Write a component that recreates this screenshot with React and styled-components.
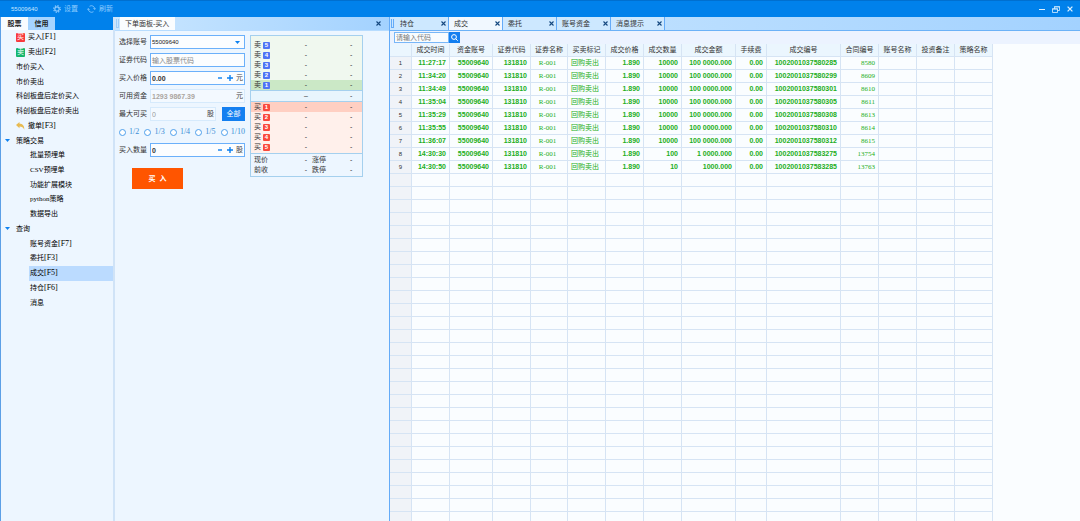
import React, { useState } from "react";
import styled, { createGlobalStyle } from "styled-components";

const GlobalStyle = createGlobalStyle`
  * {
    box-sizing: border-box;
  }
  body {
    margin: 0;
    background: #edf6ff;
    color: #333;
    font-family: "Liberation Sans", "Noto Sans CJK SC", sans-serif;
    font-size: 7px;
    line-height: 10px;
  }
  button, input, select {
    margin: 0;
    padding: 0;
    border: 0;
    background: none;
    color: inherit;
    font: inherit;
  }
  button {
    cursor: pointer;
  }
`;

const Window = styled.div`
  display: flex;
  flex-direction: column;
  height: 100vh;
  overflow: hidden;
`;

const Latin = styled.span`
  font-family: "Liberation Serif", serif;
  font-size: ${(props) => props.$size || 7}px;
  line-height: 8px;
`;

const TitleBar = styled.header`
  display: flex;
  align-items: center;
  flex: none;
  height: 17px;
  padding: 0 6px 0 11px;
  border-top: 1px solid #006fcf;
  background: #0081eb;
  color: #a9d8ff;
`;

const Account = styled.span`
  width: 42px;
  color: #c6e5ff;
  font-size: 6px;
`;

const TitleButton = styled.button`
  display: flex;
  align-items: center;
  gap: 3px;
  margin-right: 9px;
  color: #8ccaff;
`;

const WindowButtons = styled.div`
  display: flex;
  align-items: center;
  gap: 6px;
  margin-left: auto;
`;

const IconButton = styled.button`
  display: flex;
  align-items: center;
  justify-content: center;
  width: 8px;
  height: 10px;
  color: ${(props) => props.$color || "#d9efff"};
`;

const Main = styled.main`
  display: flex;
  flex: 1;
  min-height: 0;
`;

/* ---------- sidebar ---------- */

const Sidebar = styled.nav`
  flex: none;
  width: 113px;
  border-left: 1px solid #5c9fe6;
`;

const SideTabs = styled.div`
  display: flex;
  height: 13px;
  background: #0081eb;
`;

const SideTab = styled.button`
  width: 27px;
  background: ${(props) => (props.$active ? "#f8fcff" : "#a5d4ff")};
  color: #222;
  font-weight: 700;
`;

const Tree = styled.ul`
  display: grid;
  grid-auto-rows: 1fr;
  height: 280px;
  margin: 0;
  padding: 0;
  list-style: none;
`;

const TreeRow = styled.li`
  display: flex;
  padding-left: ${(props) => (props.$child ? 28 : 3)}px;
`;

const TreeButton = styled.button`
  display: flex;
  align-items: center;
  flex: 1;
  padding-left: 1px;
  background: ${(props) => (props.$active ? "#bbdbff" : "none")};
  color: #000;
  white-space: nowrap;
`;

const Caret = styled.span`
  display: flex;
  width: 11px;
`;

const ItemIcon = styled.span`
  display: flex;
  align-items: center;
  justify-content: center;
  width: 9px;
  height: 9px;
  margin-right: 3px;
  border-radius: 1px;
  background: ${(props) => props.$bg || "none"};
  color: #fff;
`;

/* ---------- docks ---------- */

const OrderDock = styled.section`
  flex: none;
  width: 277px;
  border-left: 2px solid #d0e3f7;
  border-right: 1px solid #64abf8;
`;

const DockHeader = styled.div`
  display: flex;
  height: 14px;
  border-bottom: 1px solid ${(props) => props.$line || "#b7dcff"};
  background: linear-gradient(90deg, #cbe7ff, #a3d2ff);
`;

const Grip = styled.span`
  width: 3px;
  height: 9px;
  margin: 2px 1px 0;
  border: 1px solid ${(props) => props.$color || "#a0cdf8"};
  border-top-width: 0;
`;

const DockTitle = styled.h1`
  width: 55px;
  margin: 0;
  padding: 2px 5px;
  background: #fafdff;
  font-size: 7px;
  font-weight: 400;
  white-space: nowrap;
`;

const DockClose = styled.div`
  display: flex;
  align-items: center;
  margin: 0 7px 0 auto;
`;

const OrderBody = styled.div`
  display: flex;
  align-items: flex-start;
  gap: 5px;
  padding: 4px 0 0 4px;
`;

const Form = styled.form`
  display: flex;
  flex-direction: column;
  gap: 4px;
  width: 126px;
`;

const FormRow = styled.div`
  display: flex;
  align-items: center;
  height: 14px;
`;

const Label = styled.label`
  width: 31px;
  color: #333;
  white-space: nowrap;
`;

const Field = styled.div`
  display: flex;
  align-items: center;
  flex: 1;
  min-width: 0;
  height: 14px;
  padding: 0 1px;
  border: 1px solid ${(props) => (props.$flat ? "#d6eafc" : "#6bb0fa")};
  background: ${(props) => (props.$flat ? "#f3f9ff" : "#fbfdff")};
  color: #444;
`;

const TextInput = styled.input`
  flex: 1;
  min-width: 0;
  height: 12px;
  outline: none;
  color: ${(props) => props.$color || "#333"};
  font-weight: ${(props) => (props.$bold ? 700 : 400)};

  &::placeholder {
    color: #888;
    opacity: 1;
  }
`;

const AccountSelect = styled.select`
  flex: 1;
  min-width: 0;
  appearance: none;
  outline: none;
  color: #222;
  font-size: 6px;
`;

const AllButton = styled.button`
  width: 23px;
  height: 14px;
  margin-left: 6px;
  background: #137ff0;
  color: #fff;
`;

const Fractions = styled.div`
  display: flex;
  align-items: center;
  justify-content: space-between;
  height: 14px;
  color: #3a8fd6;
`;

const Fraction = styled.label`
  display: flex;
  align-items: center;
  gap: 3px;
`;

const Radio = styled.input`
  appearance: none;
  width: 7px;
  height: 7px;
  border: 1px solid #4d9fec;
  border-radius: 50%;
  background: #fff;
`;

const BuyButton = styled.button`
  width: 51px;
  height: 21px;
  margin: 7px 0 0 13px;
  background: #ff5500;
  color: #fff;
  font-weight: 700;
  white-space: pre;
`;

const Quotes = styled.div`
  width: 113px;
  border: 1px solid #a5d0ee;
`;

const QuoteZone = styled.div`
  padding: ${(props) => props.$pad || "0"};
  border-bottom: ${(props) => (props.$last ? "0" : "1px solid #a5d0ee")};
  background: ${(props) => props.$bg};
`;

const QuoteRow = styled.div`
  display: grid;
  grid-template-columns: 9px 37px 12px 1fr 12px;
  align-items: center;
  height: 10px;
  padding-left: 3px;
  background: ${(props) => props.$bg || "none"};
  white-space: nowrap;
`;

const Level = styled.span`
  width: 7px;
  height: 7px;
  border-radius: 1px;
  background: ${(props) => props.$bg};
  color: #fff;
  font-size: 6px;
  font-weight: 700;
  line-height: 7px;
  text-align: center;
`;

const Dash = styled.span`
  grid-column: ${(props) => props.$col};
  text-align: ${(props) => (props.$col === 3 ? "center" : "left")};
`;

/* ---------- trades ---------- */

const TradesDock = styled.section`
  display: flex;
  flex-direction: column;
  flex: 1;
  min-width: 0;
`;

const Tab = styled.div`
  display: flex;
  align-items: center;
  justify-content: space-between;
  width: 54px;
  padding: 0 1px 0 5px;
  border-right: 1px solid #64abf8;
  background: ${(props) => (props.$active ? "#f1f8ff" : "#cde8ff")};
  white-space: nowrap;
`;

const SearchBar = styled.div`
  display: flex;
  align-items: center;
  flex: none;
  height: 13px;
  padding-left: 4px;
  background: #ecf3ff;
`;

const SearchInput = styled.input`
  width: 55px;
  height: 11px;
  padding: 0 1px;
  border: 1px solid #78b7f7;
  background: #f8fcff;

  &::placeholder {
    color: #777;
    opacity: 1;
  }
`;

const SearchButton = styled.button`
  display: flex;
  align-items: center;
  justify-content: center;
  width: 11px;
  height: 11px;
  background: #137ff0;
  color: #fff;
`;

const TableWrap = styled.div`
  flex: 1;
  min-height: 0;
  overflow: hidden;
  background: #fafdff;
`;

const Table = styled.table`
  width: 603px;
  table-layout: fixed;
  border-collapse: separate;
  border-spacing: 0;
  white-space: nowrap;

  th, td {
    height: 13px;
    padding: 0 3px 0 0;
    overflow: hidden;
    border: 1px solid #d6e4f4;
    border-width: 0 1px 1px 0;
    line-height: 10px;
    font-weight: 400;
  }
  thead th {
    padding: 0;
    background: #ebf6fe;
    text-align: center;
  }
  tbody th {
    padding: 0;
    background: #f0f3f8;
    text-align: center;
    font-size: 6px;
  }
`;

const Cell = styled.td`
  color: #22ae22;
  text-align: ${(props) => (props.$kind === "text" ? "center" : "right")};

  && {
    font-weight: ${(props) => (props.$kind === "num" ? 700 : 400)};
  }
`;

const menu = [
  { label: "买入", hotkey: "[F1]", icon: "买", bg: "#f8393c" },
  { label: "卖出", hotkey: "[F2]", icon: "卖", bg: "#12b56c" },
  { label: "市价买入" },
  { label: "市价卖出" },
  { label: "科创板盘后定价买入" },
  { label: "科创板盘后定价卖出" },
  { label: "撤单", hotkey: "[F3]", undo: true },
  { label: "策略交易", group: true },
  { label: "批量预埋单", child: true },
  { label: "CSV预埋单", child: true },
  { label: "功能扩展模块", child: true },
  { label: "python策略", child: true },
  { label: "数据导出", child: true },
  { label: "查询", group: true },
  { label: "账号资金", hotkey: "[F7]", child: true },
  { label: "委托", hotkey: "[F3]", child: true },
  { label: "成交", hotkey: "[F5]", child: true },
  { label: "持仓", hotkey: "[F6]", child: true },
  { label: "消息", child: true },
];

const columns = [
  { title: "成交时间", width: 38, kind: "num" },
  { title: "资金账号", width: 43, kind: "num" },
  { title: "证券代码", width: 38, kind: "num" },
  { title: "证券名称", width: 37, kind: "text" },
  { title: "买卖标记", width: 38, kind: "text" },
  { title: "成交价格", width: 38, kind: "num" },
  { title: "成交数量", width: 38, kind: "num" },
  { title: "成交金额", width: 54, kind: "num" },
  { title: "手续费", width: 31, kind: "num" },
  { title: "成交编号", width: 74, kind: "num" },
  { title: "合同编号", width: 38, kind: "id" },
  { title: "账号名称", width: 38, kind: "text" },
  { title: "投资备注", width: 38, kind: "text" },
  { title: "策略名称", width: 38, kind: "text" },
];

const trade = (time, count, amount, tradeId, contractId) => [
  time, "55009640", "131810", "R-001", "回购卖出", "1.890", count, amount, "0.00", tradeId, contractId, "", "", "",
];

const trades = [
  trade("11:27:17", "10000", "100 0000.000", "1002001037580285", "8580"),
  trade("11:34:20", "10000", "100 0000.000", "1002001037580299", "8609"),
  trade("11:34:49", "10000", "100 0000.000", "1002001037580301", "8610"),
  trade("11:35:04", "10000", "100 0000.000", "1002001037580305", "8611"),
  trade("11:35:29", "10000", "100 0000.000", "1002001037580308", "8613"),
  trade("11:35:55", "10000", "100 0000.000", "1002001037580310", "8614"),
  trade("11:36:07", "10000", "100 0000.000", "1002001037580312", "8615"),
  trade("14:30:30", "100", "1 0000.000", "1002001037583275", "13754"),
  trade("14:30:50", "10", "1000.000", "1002001037583285", "13763"),
];

const emptyRows = Array.from({ length: 60 }, (_, i) => i);

// latin runs use the serif face, chinese keeps the body font
const Mixed = ({ text }) => (
  <>
    {text.split(/([\x20-\x7e]+)/).map((part, i) => (i % 2 ? <Latin key={i}>{part}</Latin> : part))}
  </>
);

const CloseIcon = ({ size = 5 }) => (
  <svg width={size} height={size} viewBox="0 0 5 5" stroke="currentColor" strokeWidth="1.1">
    <path d="M.5 .5l4 4M4.5 .5l-4 4" />
  </svg>
);

const GearIcon = () => (
  <svg width="8" height="8" viewBox="0 0 16 16" fill="none" stroke="currentColor">
    <circle cx="8" cy="8" r="4.4" strokeWidth="2.4" />
    <circle cx="8" cy="8" r="6.6" strokeWidth="2.4" strokeDasharray="2.6 2.58" />
  </svg>
);

const RefreshIcon = () => (
  <svg width="9" height="8" viewBox="0 0 18 16" fill="none" stroke="currentColor" strokeWidth="1.6">
    <path d="M5 2.6A6.6 6.6 0 0 1 15.4 8M13 13.4A6.6 6.6 0 0 1 2.6 8" />
    <path d="M12.8 6.6l2.6 2.6 2.2-2.6M.4 9.4L2.6 6.8l2.6 2.6" />
  </svg>
);

const RestoreIcon = () => (
  <svg width="8" height="7" viewBox="0 0 8 7" fill="none" stroke="currentColor" strokeWidth=".8">
    <path d="M.5 3h5v3.5h-5zM2.5 3V.8h5v3.7h-2" />
    <path d="M2 .8h6M0 2.8h6" />
  </svg>
);

const CaretIcon = () => (
  <svg width="5" height="3" viewBox="0 0 5 3" fill="#0f82f0">
    <path d="M0 0h5L2.5 3z" />
  </svg>
);

const UndoIcon = () => (
  <svg width="9" height="8" viewBox="0 0 18 16" fill="#e8bb52">
    <path d="M0 6L7 0v3.5c6 0 10 3.5 9.6 12C14.5 11 12 9 7 9v3.5z" />
  </svg>
);

const SearchIcon = () => (
  <svg width="7" height="7" viewBox="0 0 7 7" fill="none" stroke="currentColor">
    <circle cx="3" cy="3" r="2.4" />
    <path d="M4.7 4.7l2 2" />
  </svg>
);

const SignIcon = ({ plus }) => (
  <svg width="6" height="6" viewBox="0 0 6 6" stroke="#0b7ff0" strokeWidth="1.4">
    <path d={plus ? "M0 3h6M3 0v6" : "M1 3h4"} />
  </svg>
);

const StepButton = styled(IconButton)`
  margin-right: 2px;
`;

const Stepper = ({ id, value, unit }) => {
  const [text, setText] = useState(value);
  const step = (n) => setText(String(Math.max(0, Number(text) + n)));
  return (
    <Field>
      <TextInput id={id} $bold value={text} onChange={(e) => setText(e.target.value)} />
      <StepButton type="button" aria-label="减少" onClick={() => step(-1)}>
        <SignIcon />
      </StepButton>
      <StepButton type="button" aria-label="增加" onClick={() => step(1)}>
        <SignIcon plus />
      </StepButton>
      {unit}
    </Field>
  );
};

const Levels = ({ side, levels, color }) =>
  levels.map((n) => (
    <QuoteRow key={n} $bg={n === 1 ? color.first : undefined}>
      {side}
      <Level $bg={color.badge}>{n}</Level>
      <Dash $col={3}>-</Dash>
      <Dash $col={5}>-</Dash>
    </QuoteRow>
  ));

const OrderPanel = () => (
  <OrderDock>
    <DockHeader>
      <Grip />
      <DockTitle>下单面板-买入</DockTitle>
      <DockClose>
        <IconButton type="button" aria-label="关闭" $color="#14477f"><CloseIcon /></IconButton>
      </DockClose>
    </DockHeader>
    <OrderBody>
      <Form onSubmit={(e) => e.preventDefault()}>
        <FormRow>
          <Label htmlFor="account">选择账号</Label>
          <Field>
            <AccountSelect id="account">
              <option>55009640</option>
            </AccountSelect>
            <StepButton as="span"><CaretIcon /></StepButton>
          </Field>
        </FormRow>
        <FormRow>
          <Label htmlFor="code">证券代码</Label>
          <Field><TextInput id="code" placeholder="输入股票代码" /></Field>
        </FormRow>
        <FormRow>
          <Label htmlFor="price">买入价格</Label>
          <Stepper id="price" value="0.00" unit="元" />
        </FormRow>
        <FormRow>
          <Label htmlFor="funds">可用资金</Label>
          <Field $flat>
            <TextInput id="funds" readOnly $bold $color="#aaa5a0" defaultValue="1293 9867.39" />
            元
          </Field>
        </FormRow>
        <FormRow>
          <Label htmlFor="max">最大可买</Label>
          <Field $flat>
            <TextInput id="max" readOnly $color="#999" defaultValue="0" />
            股
          </Field>
          <AllButton type="button">全部</AllButton>
        </FormRow>
        <Fractions>
          {["1/2", "1/3", "1/4", "1/5", "1/10"].map((f) => (
            <Fraction key={f}>
              <Radio type="radio" name="fraction" value={f} />
              <Latin $size={8}>{f}</Latin>
            </Fraction>
          ))}
        </Fractions>
        <FormRow>
          <Label htmlFor="count">买入数量</Label>
          <Stepper id="count" value="0" unit="股" />
        </FormRow>
        <BuyButton type="submit">买  入</BuyButton>
      </Form>
      <Quotes>
        <QuoteZone $bg="#f0f8ef" $pad="4px 0 0">
          <Levels side="卖" levels={[5, 4, 3, 2, 1]} color={{ badge: "#4f74f5", first: "#cbe8c6" }} />
        </QuoteZone>
        <QuoteZone $bg="#e8f5fd">
          <QuoteRow>
            <Dash $col={3}>–</Dash>
            <Dash $col={5}>-</Dash>
          </QuoteRow>
        </QuoteZone>
        <QuoteZone $bg="#fff0eb" $pad="0 0 1px">
          <Levels side="买" levels={[1, 2, 3, 4, 5]} color={{ badge: "#f9483c", first: "#ffcfc2" }} />
        </QuoteZone>
        <QuoteZone $bg="#edf6ff" $pad="1px 0" $last>
          {[["现价", "涨停"], ["前收", "跌停"]].map(([a, b]) => (
            <QuoteRow key={a}>
              {a}
              <Dash $col={3}>-</Dash>
              <span>{b}</span>
              <Dash $col={5}>-</Dash>
            </QuoteRow>
          ))}
        </QuoteZone>
      </Quotes>
    </OrderBody>
  </OrderDock>
);

const Trades = () => (
  <TradesDock>
    <DockHeader $line="#6cb2f7">
      <Grip $color="#64abf8" />
      {["持仓", "成交", "委托", "账号资金", "消息提示"].map((name) => (
        <Tab key={name} $active={name === "成交"}>
          {name}
          <IconButton type="button" aria-label={"关闭" + name} $color="#14477f"><CloseIcon /></IconButton>
        </Tab>
      ))}
    </DockHeader>
    <SearchBar>
      <SearchInput aria-label="代码" placeholder="请输入代码" />
      <SearchButton type="button" aria-label="搜索"><SearchIcon /></SearchButton>
    </SearchBar>
    <TableWrap>
      <Table>
        <colgroup>
          <col style={{ width: 22 }} />
          {columns.map((c) => <col key={c.title} style={{ width: c.width }} />)}
        </colgroup>
        <thead>
          <tr>
            <th />
            {columns.map((c) => <th key={c.title}>{c.title}</th>)}
          </tr>
        </thead>
        <tbody>
          {trades.map((row, i) => (
            <tr key={row[9]}>
              <th>{i + 1}</th>
              {row.map((value, j) => (
                <Cell key={columns[j].title} $kind={columns[j].kind}>
                  {columns[j].kind === "num" ? value : <Mixed text={value} />}
                </Cell>
              ))}
            </tr>
          ))}
          {emptyRows.map((i) => (
            <tr key={i}>
              <th />
              {columns.map((c) => <td key={c.title} />)}
            </tr>
          ))}
        </tbody>
      </Table>
    </TableWrap>
  </TradesDock>
);

const App = () => {
  const [active, setActive] = useState("成交");

  return (
    <Window>
      <GlobalStyle />
      <TitleBar>
        <Account>55009640</Account>
        <TitleButton type="button"><GearIcon />设置</TitleButton>
        <TitleButton type="button"><RefreshIcon />刷新</TitleButton>
        <WindowButtons>
          <IconButton type="button" aria-label="最小化">
            <svg width="6" height="6" viewBox="0 0 6 6" stroke="currentColor"><path d="M0 3.5h6" /></svg>
          </IconButton>
          <IconButton type="button" aria-label="还原"><RestoreIcon /></IconButton>
          <IconButton type="button" aria-label="关闭"><CloseIcon size={6} /></IconButton>
        </WindowButtons>
      </TitleBar>
      <Main>
        <Sidebar>
          <SideTabs>
            <SideTab type="button" $active>股票</SideTab>
            <SideTab type="button">信用</SideTab>
          </SideTabs>
          <Tree>
            {menu.map((item) => (
              <TreeRow key={item.label} $child={item.child}>
                <TreeButton type="button" $active={active === item.label} onClick={() => setActive(item.label)}>
                  {!item.child && <Caret>{item.group && <CaretIcon />}</Caret>}
                  {item.icon && <ItemIcon $bg={item.bg}>{item.icon}</ItemIcon>}
                  {item.undo && <ItemIcon><UndoIcon /></ItemIcon>}
                  <span>
                    <Mixed text={item.label} />
                    {item.hotkey && <Latin $size={8}>{item.hotkey}</Latin>}
                  </span>
                </TreeButton>
              </TreeRow>
            ))}
          </Tree>
        </Sidebar>
        <OrderPanel />
        <Trades />
      </Main>
    </Window>
  );
};

export default App;
